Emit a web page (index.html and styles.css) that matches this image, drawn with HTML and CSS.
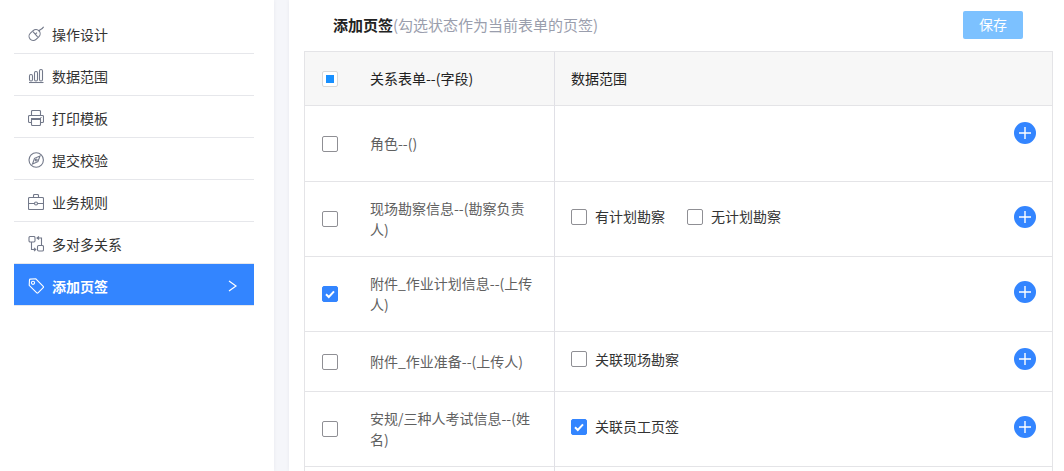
FILE: index.html
```html
<!DOCTYPE html>
<html lang="zh-CN">
<head>
    <meta charset="UTF-8">
    <meta name="viewport" content="width=device-width, initial-scale=1.0">
    <title>添加页签</title>
    <link rel="stylesheet" href="styles.css">
</head>
<body>
    <div class="page">
        <nav class="sidebar">
            <a class="menu-item" href="#">
                <svg class="menu-icon" viewBox="0 0 16 16"><rect x="2.4" y="3" width="8.4" height="12" rx="4.2" transform="rotate(48 6.6 9)"/><path d="M10.8 5.2 C12 3 13.4 4.2 15.6 .8 M5 5.6 L9.6 10.8 M7.3 8.2 L9 6.6"/></svg>
                <span>操作设计</span>
            </a>
            <a class="menu-item" href="#">
                <svg class="menu-icon" viewBox="0 0 16 16"><rect x="1.5" y="6.5" width="3" height="6.5" rx="1.4"/><rect x="6.5" y="3.5" width="3" height="9.5" rx="1.4"/><rect x="11.5" y="1.5" width="3" height="11.5" rx="1.4"/><path d="M1 14.5 H15.5"/></svg>
                <span>数据范围</span>
            </a>
            <a class="menu-item" href="#">
                <svg class="menu-icon" viewBox="0 0 16 16"><path d="M3.5 5.5 V1.5 Q3.5 .5 4.5 .5 H11.5 Q12.5 .5 12.5 1.5 V5.5"/><path d="M3.5 12.5 H1.5 Q.5 12.5 .5 11.5 V6.5 Q.5 5.5 1.5 5.5 H14.5 Q15.5 5.5 15.5 6.5 V11.5 Q15.5 12.5 14.5 12.5 H12.5"/><path d="M3.5 9.5 H12.5 V14.5 Q12.5 15.5 11.5 15.5 H4.5 Q3.5 15.5 3.5 14.5 Z M3 8.5 H13 M12.5 7.5 H13.5"/></svg>
                <span>打印模板</span>
            </a>
            <a class="menu-item" href="#">
                <svg class="menu-icon" viewBox="0 0 16 16"><circle cx="8.2" cy="8" r="7.2"/><path d="M12 4 L9.9 9.7 L4.5 12 L6.5 6.3 Z"/><circle cx="8.2" cy="8" r="1"/></svg>
                <span>提交校验</span>
            </a>
            <a class="menu-item" href="#">
                <svg class="menu-icon" viewBox="0 0 16 16"><rect x=".5" y="3.5" width="15" height="12" rx="1"/><path d="M5.5 3.5 V1.5 Q5.5 .5 6.5 .5 H9.5 Q10.5 .5 10.5 1.5 V3.5 M.5 9.5 H6.5 M9.5 9.5 H15.5"/><circle cx="8" cy="9.5" r="1.5"/></svg>
                <span>业务规则</span>
            </a>
            <a class="menu-item" href="#">
                <svg class="menu-icon" viewBox="0 0 16 16"><rect x="1" y=".5" width="6" height="5.5" rx="1.2"/><rect x="9.5" y="9.5" width="6" height="5.5" rx="1.2"/><path d="M9 2 H13.5 V9.5 M3.5 6 V13.5 H7.5 M11 .5 L9 2 L11 3.5 M6 11.8 L7.8 13.5 L6 15.2"/></svg>
                <span>多对多关系</span>
            </a>
            <a class="menu-item active" href="#">
                <svg class="menu-icon" viewBox="0 0 16 16"><path d="M1.5 1.8 Q1.6 1.2 2.2 1.1 L7.8 .8 L15.2 8.4 Q15.8 9 15.2 9.6 L10 14.8 Q9.4 15.4 8.8 14.8 L1.2 7.4 Z"/><circle cx="5" cy="4.8" r="1.6"/></svg>
                <span>添加页签</span>
                <svg class="arrow" viewBox="0 0 10 12"><path d="M1 1 L8 6 L1 11"/></svg>
            </a>
        </nav>

        <main class="content">
            <header class="toolbar">
                <h1 class="title">添加页签<span class="hint">(勾选状态作为当前表单的页签)</span></h1>
                <button class="save-btn" type="button">保存</button>
            </header>

            <table class="tab-table">
                <thead>
                    <tr>
                        <th class="col-check"><input type="checkbox" class="check" id="check-all" aria-label="全选"></th>
                        <th class="col-form">关系表单--(字段)</th>
                        <th class="col-range">数据范围</th>
                    </tr>
                </thead>
                <tbody>
                    <tr>
                        <td class="col-check"><input type="checkbox" class="check row-check" aria-label="角色"></td>
                        <td class="col-form">角色--()</td>
                        <td class="col-range">
                            <div class="range tall">
                                <button class="add-btn" type="button" aria-label="添加"><svg viewBox="0 0 22 22"><path d="M11 5 V17 M5 11 H17"/></svg></button>
                            </div>
                        </td>
                    </tr>
                    <tr>
                        <td class="col-check"><input type="checkbox" class="check row-check" aria-label="现场勘察信息"></td>
                        <td class="col-form">现场勘察信息--(勘察负责人)</td>
                        <td class="col-range">
                            <div class="range">
                                <label class="option"><input type="checkbox" class="check">有计划勘察</label>
                                <label class="option"><input type="checkbox" class="check">无计划勘察</label>
                                <button class="add-btn" type="button" aria-label="添加"><svg viewBox="0 0 22 22"><path d="M11 5 V17 M5 11 H17"/></svg></button>
                            </div>
                        </td>
                    </tr>
                    <tr>
                        <td class="col-check"><input type="checkbox" class="check row-check" aria-label="附件_作业计划信息" checked></td>
                        <td class="col-form">附件_作业计划信息--(上传人)</td>
                        <td class="col-range">
                            <div class="range">
                                <button class="add-btn" type="button" aria-label="添加"><svg viewBox="0 0 22 22"><path d="M11 5 V17 M5 11 H17"/></svg></button>
                            </div>
                        </td>
                    </tr>
                    <tr>
                        <td class="col-check"><input type="checkbox" class="check row-check" aria-label="附件_作业准备"></td>
                        <td class="col-form">附件_作业准备--(上传人)</td>
                        <td class="col-range">
                            <div class="range">
                                <label class="option"><input type="checkbox" class="check">关联现场勘察</label>
                                <button class="add-btn" type="button" aria-label="添加"><svg viewBox="0 0 22 22"><path d="M11 5 V17 M5 11 H17"/></svg></button>
                            </div>
                        </td>
                    </tr>
                    <tr>
                        <td class="col-check"><input type="checkbox" class="check row-check" aria-label="安规/三种人考试信息"></td>
                        <td class="col-form">安规/三种人考试信息--(姓名)</td>
                        <td class="col-range">
                            <div class="range">
                                <label class="option"><input type="checkbox" class="check" checked>关联员工页签</label>
                                <button class="add-btn" type="button" aria-label="添加"><svg viewBox="0 0 22 22"><path d="M11 5 V17 M5 11 H17"/></svg></button>
                            </div>
                        </td>
                    </tr>
                    <tr>
                        <td class="col-check"></td>
                        <td class="col-form"></td>
                        <td class="col-range"></td>
                    </tr>
                </tbody>
            </table>
        </main>
    </div>
    <script>
        const checkAll = document.getElementById('check-all');
        const rowChecks = Array.from(document.querySelectorAll('.row-check'));

        function updateCheckAll() {
            const count = rowChecks.filter(c => c.checked).length;
            checkAll.checked = count === rowChecks.length;
            checkAll.indeterminate = count > 0 && count < rowChecks.length;
        }

        rowChecks.forEach(c => c.addEventListener('change', updateCheckAll));
        checkAll.addEventListener('change', () => {
            rowChecks.forEach(c => { c.checked = checkAll.checked; });
        });

        updateCheckAll();
    </script>
</body>
</html>
```
FILE: styles.css
```css
* {
    box-sizing: border-box;
}

body {
    margin: 0;
    font-family: "Noto Sans CJK SC", sans-serif;
    font-size: 14px;
    line-height: 21px;
    color: #333;
    background: #f5f6fa;
}

.page {
    display: flex;
    gap: 15px;
    height: 100vh;
    overflow: hidden;
}

/* left menu */
.sidebar {
    flex: 0 0 274px;
    padding: 12px 20px 0 14px;
    background: #fff;
    box-shadow: 0 0 4px rgba(0, 0, 50, 0.06);
}

.menu-item {
    display: flex;
    align-items: center;
    height: 42px;
    padding: 3px 16px 0 14px;
    border-bottom: 1px solid #e6e7eb;
    color: #333;
    text-decoration: none;
}

.menu-item.active {
    background: #3385ff;
    color: #fff;
    font-weight: bold;
}

.menu-icon {
    width: 16px;
    height: 16px;
    margin-right: 8px;
    fill: none;
    stroke: #73798a;
    stroke-width: 1.1;
}

.active .menu-icon {
    stroke: #fff;
}

.arrow {
    width: 10px;
    height: 12px;
    margin-left: auto;
    fill: none;
    stroke: #fff;
    stroke-width: 1.2;
}

/* right panel */
.content {
    flex: 1;
    min-width: 0;
    padding: 0 11px 0 15px;
    background: #fff;
    box-shadow: 0 0 4px rgba(0, 0, 50, 0.06);
}

.toolbar {
    display: flex;
    align-items: center;
    justify-content: space-between;
    height: 51px;
    padding: 0 30px 2px 29px;
}

.title {
    margin: 0;
    font-size: 15px;
    font-weight: bold;
    color: #222;
}

.hint {
    font-weight: normal;
    color: #9a9ead;
}

.save-btn {
    width: 60px;
    height: 28px;
    padding: 0;
    border: none;
    border-radius: 2px;
    background: #7cc1ff;
    color: #fff;
    font: inherit;
    cursor: pointer;
}

.tab-table {
    width: 100%;
    table-layout: fixed;
    border-collapse: separate;
    border-spacing: 0;
    border-top: 1px solid #e4e4e7;
    border-left: 1px solid #e4e4e7;
}

.tab-table th, .tab-table td {
    padding: 16px;
    border-bottom: 1px solid #e4e4e7;
    text-align: left;
    font-weight: normal;
}

.tab-table th {
    background: #f7f7f7;
    color: #222;
}

.tab-table .col-check {
    width: 49px;
    padding: 0 0 0 17px;
}

.tab-table .col-form {
    width: 201px;
    border-right: 1px solid #e0e0e6;
}

.tab-table td.col-form {
    color: #606060;
}

.tab-table .col-range {
    border-right: 1px solid #e4e4e7;
}

.range {
    display: flex;
    align-items: center;
    gap: 22px;
    margin-bottom: 5px;
}

.range.tall {
    margin-bottom: 21px;
}

.option {
    display: flex;
    align-items: center;
    gap: 8px;
}

.check {
    appearance: none;
    display: block;
    width: 16px;
    height: 16px;
    margin: 0;
    border: 1px solid #8f8f94;
    border-radius: 2px;
    background: #fff center / 14px 14px no-repeat;
}

.check:checked {
    border-color: #3385ff;
    background-color: #3385ff;
    background-image: url("data:image/svg+xml,%3Csvg xmlns='http://www.w3.org/2000/svg' viewBox='0 0 14 14'%3E%3Cpath d='M3 7.2 L5.8 10 L11 4.4' fill='none' stroke='white' stroke-width='2'/%3E%3C/svg%3E");
}

.check:indeterminate {
    border-color: #d9d9d9;
    background-image: linear-gradient(#1890ff, #1890ff);
    background-size: 8px 8px;
}

.add-btn {
    width: 22px;
    height: 22px;
    margin-left: auto;
    padding: 0;
    border: none;
    border-radius: 50%;
    background: #3385ff;
    cursor: pointer;
}

.add-btn svg {
    display: block;
    fill: none;
    stroke: #fff;
    stroke-width: 1.4;
}
```
